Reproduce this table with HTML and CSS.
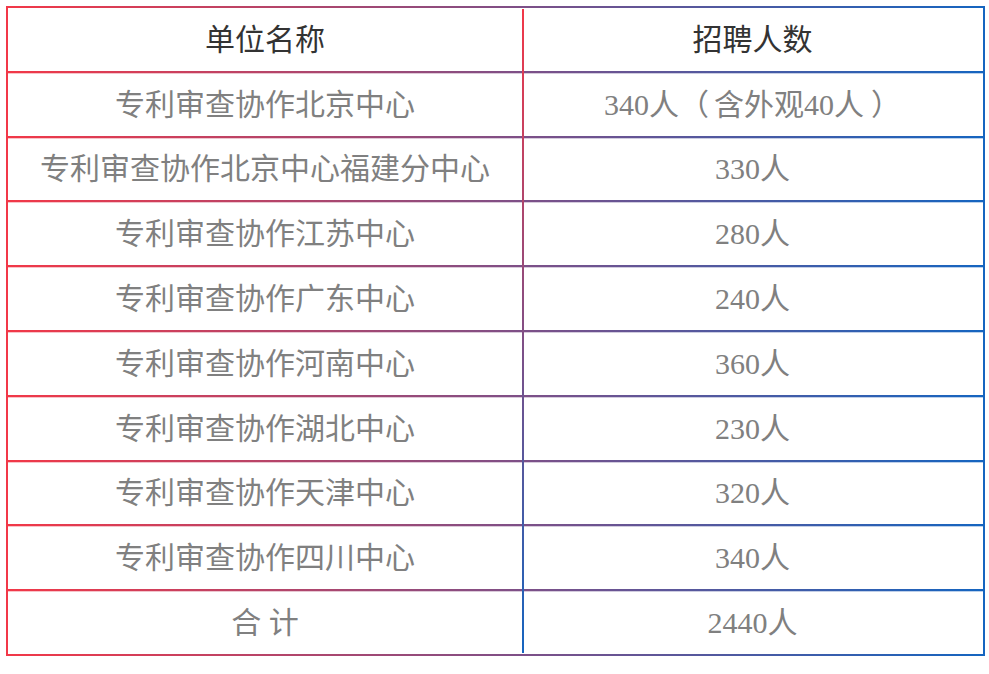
FILE: index.html
```html
<!DOCTYPE html>
<html lang="zh-CN">
<head>
<meta charset="utf-8">
<title>招聘人数</title>
<link rel="stylesheet" href="styles.css">
</head>
<body>
<div class="table">
  <div class="divider"></div>
  <div class="row head"><div class="cell">单位名称</div><div class="cell">招聘人数</div></div>
  <div class="row"><div class="cell">专利审查协作北京中心</div><div class="cell">340人<span class="paren open">（</span>含外观40人<span class="paren close">）</span></div></div>
  <div class="row short"><div class="cell">专利审查协作北京中心福建分中心</div><div class="cell">330人</div></div>
  <div class="row"><div class="cell">专利审查协作江苏中心</div><div class="cell">280人</div></div>
  <div class="row"><div class="cell">专利审查协作广东中心</div><div class="cell">240人</div></div>
  <div class="row"><div class="cell">专利审查协作河南中心</div><div class="cell">360人</div></div>
  <div class="row"><div class="cell">专利审查协作湖北中心</div><div class="cell">230人</div></div>
  <div class="row short"><div class="cell">专利审查协作天津中心</div><div class="cell">320人</div></div>
  <div class="row"><div class="cell">专利审查协作四川中心</div><div class="cell">340人</div></div>
  <div class="row last"><div class="cell">合 计</div><div class="cell">2440人</div></div>
</div>
</body>
</html>
```
FILE: styles.css
```css
html, body {
  margin: 0;
  padding: 0;
  background: #ffffff;
}
body {
  padding: 6px 0 0 6px;
  font-family: "Liberation Serif", "Noto Sans CJK SC", serif;
  font-size: 30px;
  color: #808080;
}
.table {
  position: relative;
  width: 979px;
  box-sizing: border-box;
  border: 2px solid #f03a4c;
  border-image: linear-gradient(to right, #f23848, #1565c0) 1;
  display: flex;
  flex-direction: column;
}
.divider {
  position: absolute;
  left: 514px;
  top: 1px;
  width: 2px;
  height: 644px;
  background: linear-gradient(to bottom, #f23848, #1565c0);
  z-index: 1;
}
.row {
  display: grid;
  grid-template-columns: 514px 461px;
  height: 63px;
  box-sizing: content-box;
  border-bottom: 2px solid #f03a4c;
  border-image: linear-gradient(to right, #f23848, #1565c0) 1;
  background: linear-gradient(to right, rgba(242, 56, 72, 0.3), rgba(21, 101, 192, 0.3)) no-repeat top left / 100% 1px;
}
.row.head {
  background: none;
}
.row.short {
  height: 62px;
}
.row.last {
  height: 63px;
  border-bottom: none;
  border-image: none;
}
.cell {
  display: flex;
  align-items: center;
  justify-content: center;
  white-space: nowrap;
  line-height: 1;
}
.paren {
  display: inline-block;
  width: 30px;
}
.paren.open {
  margin-right: 5px;
}
.paren.close {
  margin-left: 7px;
}
.head .cell {
  color: #333333;
}
```
